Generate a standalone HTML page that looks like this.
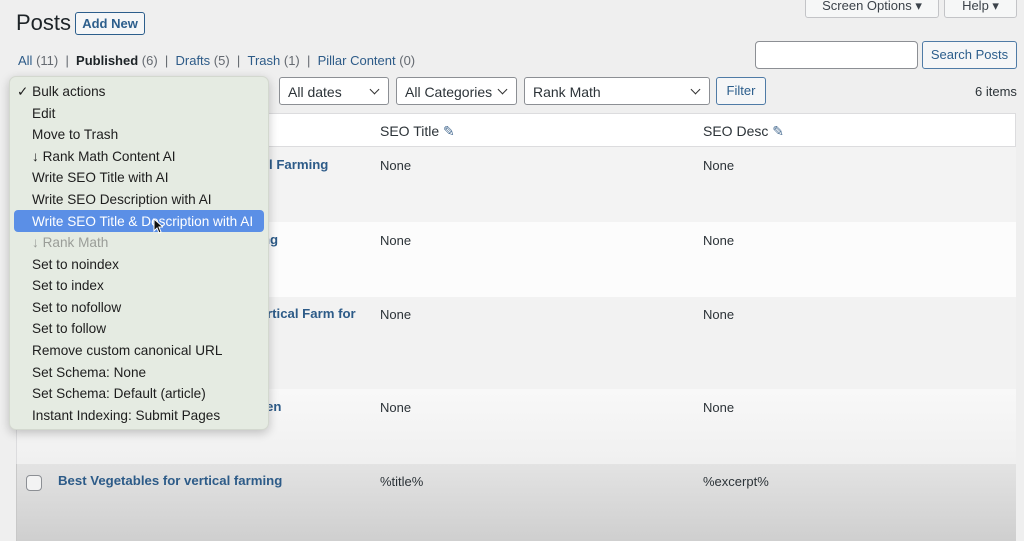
<!DOCTYPE html>
<html><head><meta charset="utf-8"><style>
*{margin:0;padding:0;box-sizing:border-box}
body{width:1024px;height:541px;overflow:hidden;background:#efefef;font-family:"Liberation Sans",sans-serif;font-size:13px;color:#2c3338;position:relative}
.a{position:absolute;white-space:nowrap}
.btn{position:absolute;border:1px solid #8ca0b3;border-radius:3px;color:#2c5e8c;background:#f5f6f7;font-size:13px;text-align:center}
.sel{position:absolute;border:1px solid #8c8f94;border-radius:3px;background:#fff;font-size:14px;color:#2c3338;padding:6px 8px;height:28px}
.sel:after{content:"";position:absolute;right:10px;top:8px;width:6px;height:6px;border-right:1.5px solid #333;border-bottom:1.5px solid #333;transform:rotate(45deg)}
.link{color:#2d5b88;font-weight:bold;font-size:13.2px}
.row{position:absolute;left:16px;width:1000px}
.menu{position:absolute;left:9px;top:76px;width:260px;height:354px;background:#e5ebe2;border-radius:7px;box-shadow:0 3px 10px rgba(0,0,0,.22);border:1px solid #d3d8cf}
.mi{position:absolute;left:22px;font-size:13.6px;color:#1d1d1d}
</style></head><body>
<div class="a" style="left:16px;top:10px;font-size:22px;color:#1d2327">Posts</div>
<div class="btn" style="left:75px;top:12px;width:70px;height:23px;line-height:21px;font-weight:bold;border-color:#2c5e8c">Add New</div>
<div class="btn" style="left:805px;top:-8px;width:134px;height:26px;line-height:26px;color:#3c434a;border-color:#c3c4c7;background:#f6f7f7">Screen Options ▾</div>
<div class="btn" style="left:944px;top:-8px;width:73px;height:26px;line-height:26px;color:#3c434a;border-color:#c3c4c7;background:#f6f7f7">Help ▾</div>
<div class="a" style="left:18px;top:53px;font-size:13px;color:#646970"><span style="color:#2d5b88">All</span> (11) &nbsp;| &nbsp;<b style="color:#1d2327">Published</b> (6) &nbsp;| &nbsp;<span style="color:#2d5b88">Drafts</span> (5) &nbsp;| &nbsp;<span style="color:#2d5b88">Trash</span> (1) &nbsp;| &nbsp;<span style="color:#2d5b88">Pillar Content</span> (0)</div>
<div class="a" style="left:755px;top:41px;width:163px;height:28px;border:1px solid #8c8f94;border-radius:4px;background:#fff"></div>
<div class="btn" style="left:922px;top:41px;width:95px;height:28px;line-height:26px;border-color:#4f7ba6">Search Posts</div>
<div class="sel" style="left:279px;top:77px;width:110px">All dates</div>
<div class="sel" style="left:396px;top:77px;width:121px">All Categories</div>
<div class="sel" style="left:524px;top:77px;width:186px">Rank Math</div>
<div class="btn" style="left:716px;top:77px;width:50px;height:28px;line-height:26px;border-color:#4f7ba6">Filter</div>
<div class="a" style="left:975px;top:84px;color:#2c3338">6 items</div>

<div class="row" style="top:113px;height:34px;background:#fff;border:1px solid #dcdcde"></div>
<div class="a" style="left:380px;top:123px;font-size:14px">SEO Title <span style="color:#4a6e93">✎</span></div>
<div class="a" style="left:703px;top:123px;font-size:14px">SEO Desc <span style="color:#4a6e93">✎</span></div>
<div class="row" style="top:147px;height:75px;background:#f3f3f3;border-left:1px solid #dcdcde"></div>
<div class="row" style="top:222px;height:75px;background:#fcfcfc;border-left:1px solid #dcdcde"></div>
<div class="row" style="top:297px;height:92px;background:#f2f2f2;border-left:1px solid #dcdcde"></div>
<div class="row" style="top:389px;height:75px;background:linear-gradient(#f8f8f8,#f0f0f0);border-left:1px solid #dcdcde"></div>
<div class="row" style="top:464px;height:77px;background:linear-gradient(#e3e3e3,#cfcfcf);border-left:1px solid #c8c8c8"></div>
<div class="a link" style="left:269px;top:157px">l Farming</div>
<div class="a link" style="left:262px;top:232px">ng</div>
<div class="a link" style="left:267px;top:306px">rtical Farm for</div>
<div class="a link" style="left:266px;top:399px">en</div>
<div class="a" style="left:26px;top:475px;width:16px;height:16px;border:1px solid #8c8f94;border-radius:4px;background:#f3f3f3"></div>
<div class="a link" style="left:58px;top:473px">Best Vegetables for vertical farming</div>
<div class="a" style="left:380px;top:158px">None</div><div class="a" style="left:703px;top:158px">None</div>
<div class="a" style="left:380px;top:233px">None</div><div class="a" style="left:703px;top:233px">None</div>
<div class="a" style="left:380px;top:307px">None</div><div class="a" style="left:703px;top:307px">None</div>
<div class="a" style="left:380px;top:400px">None</div><div class="a" style="left:703px;top:400px">None</div>
<div class="a" style="left:380px;top:474px">%title%</div><div class="a" style="left:703px;top:474px">%excerpt%</div>

<div class="menu">
<div style="position:absolute;left:4px;top:133px;width:250px;height:22px;background:#5b8fe6;border-radius:4px"></div>
<div class="mi" style="left:7px;top:7px">✓ Bulk actions</div>
<div class="mi" style="top:29px">Edit</div>
<div class="mi" style="top:50px">Move to Trash</div>
<div class="mi" style="top:72px">↓ Rank Math Content AI</div>
<div class="mi" style="top:93px">Write SEO Title with AI</div>
<div class="mi" style="top:115px">Write SEO Description with AI</div>
<div class="mi" style="top:137px;color:#fff">Write SEO Title &amp; Description with AI</div>
<div class="mi" style="top:158px;color:#9a9d98">↓ Rank Math</div>
<div class="mi" style="top:180px">Set to noindex</div>
<div class="mi" style="top:201px">Set to index</div>
<div class="mi" style="top:223px">Set to nofollow</div>
<div class="mi" style="top:244px">Set to follow</div>
<div class="mi" style="top:266px">Remove custom canonical URL</div>
<div class="mi" style="top:288px">Set Schema: None</div>
<div class="mi" style="top:309px">Set Schema: Default (article)</div>
<div class="mi" style="top:331px">Instant Indexing: Submit Pages</div>
<svg style="position:absolute;left:143px;top:141px" width="10" height="16" viewBox="0 0 10 16"><path d="M1 1 L1 13 L4 10 L6 15 L8 14 L6 9 L10 9 Z" fill="#111" stroke="#fff" stroke-width="1"/></svg>
</div>
</body></html>
